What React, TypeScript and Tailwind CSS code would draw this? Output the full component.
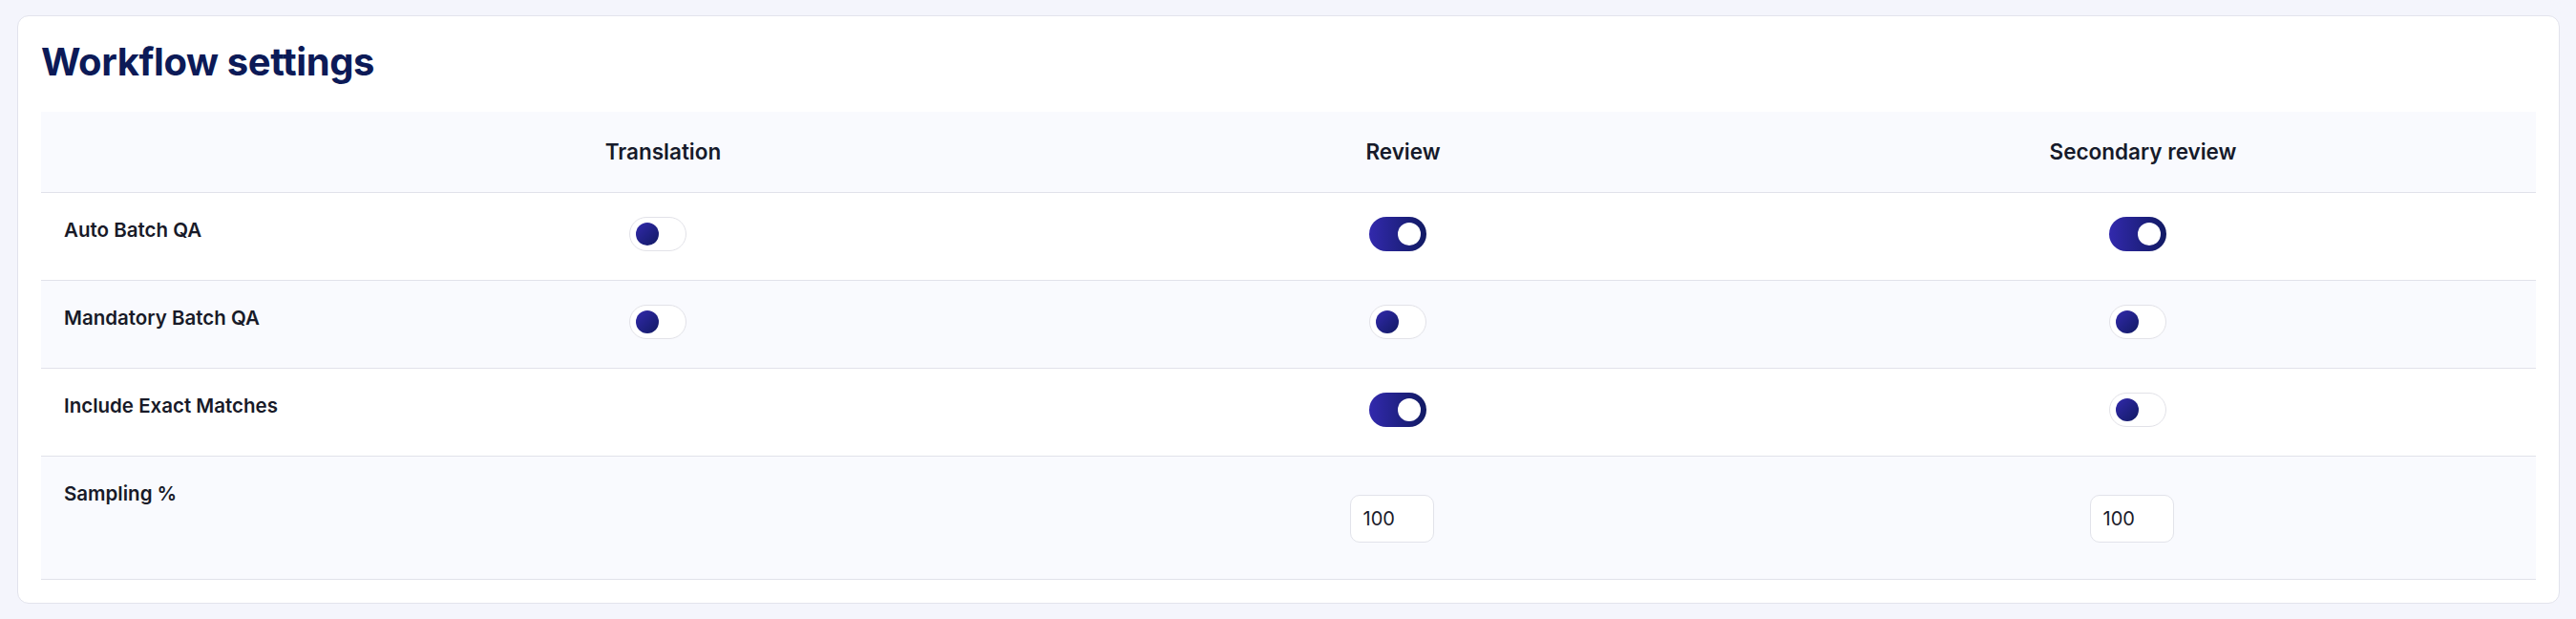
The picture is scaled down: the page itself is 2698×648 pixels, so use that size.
import React from "react";

function Toggle({ on }: { on: boolean }) {
  if (on) {
    return (
      <div className="mr-[12px] flex h-[36px] w-[60px] items-center justify-end rounded-full bg-gradient-to-r from-[#3229ad] to-[#111a63] px-[6px]">
        <div className="h-[24px] w-[24px] rounded-full bg-white" />
      </div>
    );
  }
  return (
    <div className="mr-[12px] flex h-[36px] w-[60px] items-center justify-start rounded-full border border-[#e2e2e8] bg-white px-[6px]">
      <div className="h-[24px] w-[24px] rounded-full bg-gradient-to-br from-[#3229ad] to-[#111a63]" />
    </div>
  );
}

function NumInput({ value }: { value: string }) {
  return (
    <div className="mr-[24px] mt-[40px] flex h-[50px] w-[88px] items-center rounded-[10px] border border-[#e2e3ea] bg-white pl-[13px] text-[20px] text-[#1a1b2b]">
      {value}
    </div>
  );
}

type Cell = { kind: "toggle"; on: boolean } | { kind: "input"; value: string } | { kind: "empty" };

const rows: { label: string; cells: Cell[]; bg: string; tall?: boolean }[] = [
  {
    label: "Auto Batch QA",
    bg: "bg-white",
    cells: [
      { kind: "toggle", on: false },
      { kind: "toggle", on: true },
      { kind: "toggle", on: true },
    ],
  },
  {
    label: "Mandatory Batch QA",
    bg: "bg-[#f9fafe]",
    cells: [
      { kind: "toggle", on: false },
      { kind: "toggle", on: false },
      { kind: "toggle", on: false },
    ],
  },
  {
    label: "Include Exact Matches",
    bg: "bg-white",
    cells: [{ kind: "empty" }, { kind: "toggle", on: true }, { kind: "toggle", on: false }],
  },
  {
    label: "Sampling %",
    bg: "bg-[#f9fafe]",
    tall: true,
    cells: [{ kind: "empty" }, { kind: "input", value: "100" }, { kind: "input", value: "100" }],
  },
];

export default function App() {
  return (
    <div
      className="min-h-[648px] w-full bg-[#f4f5fc] pl-[18px] pr-[17px] pt-[16px]"
      style={{ fontFamily: "Inter, 'Noto Sans', sans-serif" }}
    >
      <div className="rounded-xl border border-[#e2e3ec] bg-white p-6">
        <h1 className="text-[40px] font-bold leading-[48px] tracking-[-0.01em] text-[#0c1a57]">
          Workflow settings
        </h1>
        <div className="mt-[28px]">
          <div className="grid h-[85px] grid-cols-[240px_1fr_1fr_1fr] items-center border-b border-[#e1e2ea] bg-[#f9fafe] px-6 text-[22.5px] font-semibold text-[#161a2a]">
            <div />
            <div className="text-center">Translation</div>
            <div className="text-center">Review</div>
            <div className="text-center">Secondary review</div>
          </div>
          {rows.map((r) => (
            <div
              key={r.label}
              className={`grid grid-cols-[240px_1fr_1fr_1fr] items-start border-b border-[#e1e2ea] px-6 ${r.bg} ${
                r.tall ? "h-[129px]" : "h-[92px]"
              }`}
            >
              <div className="pt-[25px] text-[20.5px] font-semibold leading-[28px] text-[#181a28]">{r.label}</div>
              {r.cells.map((c, i) => (
                <div key={i} className={`flex justify-center ${c.kind === "toggle" ? "pt-[25px]" : ""}`}>
                  {c.kind === "toggle" && <Toggle on={c.on} />}
                  {c.kind === "input" && <NumInput value={c.value} />}
                </div>
              ))}
            </div>
          ))}
        </div>
      </div>
    </div>
  );
}
